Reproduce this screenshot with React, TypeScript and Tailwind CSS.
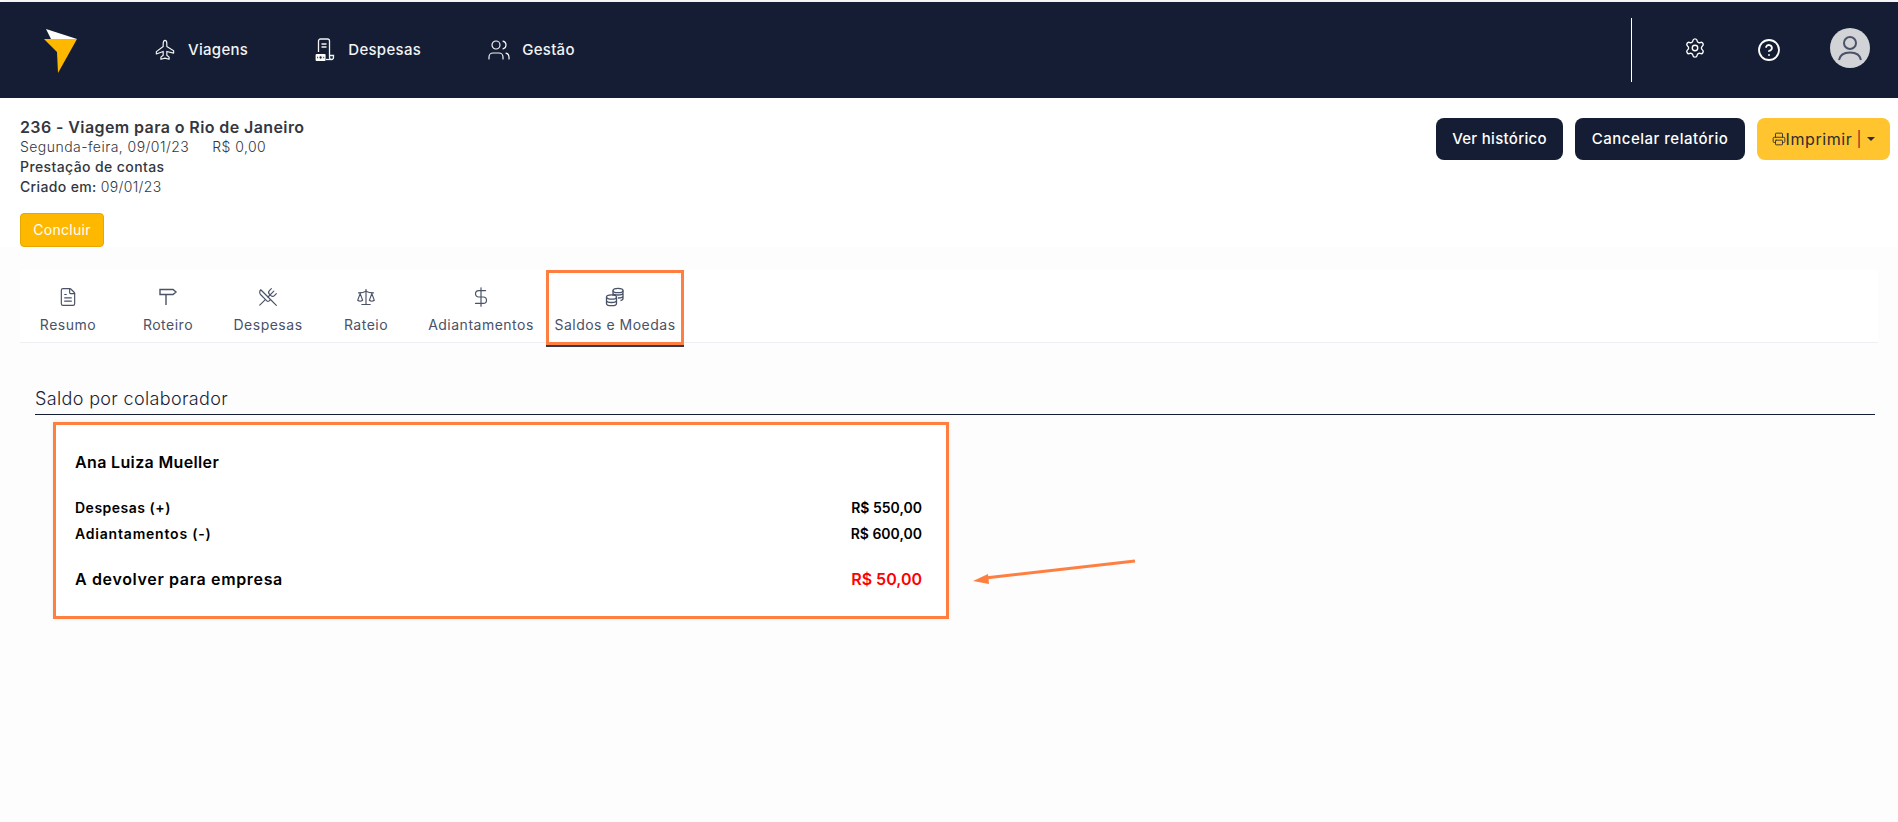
import { CircleHelp, DollarSign, FileText, Printer, Scale, Settings, UtensilsCrossed, Users } from 'lucide-react';
import type { ReactNode } from 'react';

const font = { fontFamily: 'Inter, "Liberation Sans", sans-serif' };

function PlaneIcon() {
  return (
    <svg width="20" height="24" viewBox="0 0 22 24" fill="none" stroke="currentColor" strokeWidth="1.3" strokeLinejoin="round">
      <path d="M11 1.500c1.300 0 2 1.600 2 3.500v3.200l7.500 4.600v2.600L13 13.600v4.200l2.500 2v2.400L11 21l-4.500 1.200v-2.400l2.500-2v-4.200l-7.500 2.800v-2.600L9 8.200V5c0-1.900.7-3.500 2-3.500z" />
    </svg>
  );
}

function ReceiptIcon() {
  return (
    <svg width="20" height="24" viewBox="0 0 20 24" fill="none" stroke="currentColor" strokeWidth="1.3">
      <path d="M3.500 14V3a2 2 0 0 1 2-2h7a2 2 0 0 1 2 2v16c0 1.500 1 2.500 2 2.500s2-1 2-2.500v-1.500h-3.500" />
      <path d="M6.500 6h5M6.500 9h5" />
      <path d="M11 21.500h5" />
      <rect x="0.600" y="16" width="10" height="7" rx="1" fill="#fff" stroke="none" />
      <circle cx="5.600" cy="19.500" r="1.800" fill="#141d33" />
      <path d="M2 19.500h.8M8.400 19.500h.8" stroke="#141d33" />
    </svg>
  );
}

function SignIcon() {
  return (
    <svg width="20" height="20" viewBox="0 0 20 20" fill="none" stroke="currentColor" strokeWidth="1.4">
      <path d="M2 2.500h13l3 2.500-3 2.500H2z" />
      <path d="M8 7.500V18" />
    </svg>
  );
}

function CoinsIcon() {
  return (
    <svg width="20" height="20" viewBox="0 0 20 20" fill="none" stroke="currentColor" strokeWidth="1.3">
      <ellipse cx="13" cy="3.500" rx="5" ry="2.200" />
      <path d="M8 3.500v5M18 3.500v8c0 1-1 1.800-2.500 2M8 6.500c.5 1 2.500 1.500 5 1.500s5-1 5-2.300M13 11c2.500 0 5-1 5-2.300" />
      <ellipse cx="6.500" cy="10" rx="5" ry="2.200" />
      <path d="M1.500 10v6.500c0 1.200 2.200 2.200 5 2.200s5-1 5-2.200V10M1.500 13.300c0 1.200 2.200 2.200 5 2.200s5-1 5-2.200" />
    </svg>
  );
}

function NavItem({ icon, label, className }: { icon: ReactNode; label: string; className: string }) {
  return (
    <div className={`flex items-center gap-[13px] text-[15px] font-medium tracking-[0.3px] text-[#f2f3f5] ${className}`}>
      {icon}
      <span>{label}</span>
    </div>
  );
}

function Tab({ icon, label, className }: { icon: ReactNode; label: string; className: string }) {
  return (
    <div className={`flex flex-col items-center text-[#4a5268] ${className}`}>
      <div className="flex h-[22px] items-center">{icon}</div>
      <span className="mt-[7px] text-[14px] leading-[20px] tracking-[0.5px] whitespace-nowrap">{label}</span>
    </div>
  );
}

export default function App() {
  return (
    <div style={font} className="relative h-[822px] w-[1898px] overflow-hidden bg-[#fdfdfd] pt-[2px]">
      <header className="flex h-[96px] items-center bg-[#141d33] pr-[28px] pl-[44px] shadow-[0_2px_10px_rgba(0,0,0,0.12)]">
        <svg width="34" height="44" viewBox="0 0 34 44" className="mt-[2px]">
          <path d="M2 0l31 10H7z" fill="#fff" />
          <path d="M0 10h33L14 44l-1-21z" fill="#ffb800" />
        </svg>
        <NavItem icon={<PlaneIcon />} label="Viagens" className="ml-[77px]" />
        <NavItem icon={<ReceiptIcon />} label="Despesas" className="ml-[67px]" />
        <NavItem icon={<Users size={24} strokeWidth={1.2} className="-mr-[2px]" />} label="Gestão" className="ml-[66px]" />
        <div className="ml-auto h-[64px] w-px bg-white" />
        <Settings size={22} strokeWidth={1.500} className="ml-[52px] -mt-[4px] text-white" />
        <CircleHelp size={24} strokeWidth={1.800} className="ml-[51px] text-white" />
        <div className="ml-[49px] -mt-[4px] flex h-[40px] w-[40px] items-center justify-center rounded-full bg-[#d1d3d6]">
          <svg width="28" height="28" viewBox="0 0 28 28" fill="none" stroke="#4a5268" strokeWidth="2">
            <circle cx="14" cy="9" r="6" />
            <path d="M3 26c1-5 5.500-7.500 11-7.500S24 21 25 26" />
          </svg>
        </div>
      </header>

      <section className="flex items-start justify-between bg-white pt-[19px] pr-[8px] pl-[20px]">
        <div className="text-[14px] leading-[20px] text-[#33373f]">
          <h1 className="text-[16px] font-semibold tracking-[0.4px] whitespace-nowrap">236 - Viagem para o Rio de Janeiro</h1>
          <p className="font-light tracking-[0.45px]">
            Segunda-feira, 09/01/23<span className="ml-[23px]">R$ 0,00</span>
          </p>
          <p className="font-medium tracking-[0.4px]">Prestação de contas</p>
          <p className="font-medium tracking-[0.35px]">
            Criado em: <span className="font-light">09/01/23</span>
          </p>
          <button className="mt-[16px] h-[34px] w-[84px] rounded-[4px] border border-[#e5a800] bg-[#ffb800] text-[14px] tracking-[0.3px] text-white">
            Concluir
          </button>
        </div>
        <div className="mt-px flex gap-[12px] text-[15px] font-medium">
          <button className="h-[42px] w-[127px] rounded-[8px] bg-[#141d33] tracking-[0.3px] text-white">Ver histórico</button>
          <button className="h-[42px] w-[170px] rounded-[8px] bg-[#141d33] tracking-[0.5px] text-white">Cancelar relatório</button>
          <button className="flex h-[42px] w-[133px] items-center justify-center rounded-[8px] bg-[#ffc42e] text-[#2b2b33]">
            <Printer size={14} strokeWidth={1.500} />
            <span className="text-[16px] font-normal tracking-[0.6px]">Imprimir</span>
            <span className="ml-[4px] font-normal text-[#7a2b2b]">|</span>
            <span className="ml-[6px] h-0 w-0 border-x-[4px] border-t-[4px] border-x-transparent border-t-[#2b2b33]" />
          </button>
        </div>
      </section>

      <nav className="mx-[20px] mt-[23px] flex h-[73px] items-start border-b border-[#eeeff3] bg-white pt-[16px]">
        <Tab icon={<FileText size={20} strokeWidth={1.400} />} label="Resumo" className="w-[96px]" />
        <Tab icon={<SignIcon />} label="Roteiro" className="w-[104px]" />
        <Tab icon={<UtensilsCrossed size={20} strokeWidth={1.400} />} label="Despesas" className="w-[96px]" />
        <Tab icon={<Scale size={20} strokeWidth={1.400} />} label="Rateio" className="w-[100px]" />
        <Tab icon={<DollarSign size={22} strokeWidth={1.300} />} label="Adiantamentos" className="w-[130px]" />
        <div className="-mt-[16px] h-[75px] w-[138px] shrink-0 shadow-[0_2px_0_#333a50]">
          <div className="flex h-full flex-col items-center border-[3px] border-[#ff7f41] pt-[13px] text-[#4a5268]">
            <div className="flex h-[22px] items-center">
              <CoinsIcon />
            </div>
            <span className="mt-[7px] text-[14px] leading-[20px] tracking-[0.5px] whitespace-nowrap">Saldos e Moedas</span>
          </div>
        </div>
      </nav>

      <main className="pt-[43px] pr-[23px] pl-[35px]">
        <h2 className="border-b border-[#141d33] pb-[2px] text-[18px] leading-[26px] font-light tracking-[0.35px] text-[#1c2233]">
          Saldo por colaborador
        </h2>
        <div className="mt-[7px] ml-[18px] w-[896px] border-[3px] border-[#ff7f41] bg-white pt-[26px] pr-[24px] pl-[19px] text-black shadow-[0_0_4px_rgba(0,0,0,0.08)]">
          <p className="text-[16px] leading-[22px] font-semibold tracking-[0.35px]">Ana Luiza Mueller</p>
          <div className="mt-[22px] flex justify-between text-[14px] leading-[26px] font-semibold">
            <span className="tracking-[0.5px]">Despesas (+)</span>
            <span>R$ 550,00</span>
          </div>
          <div className="flex justify-between text-[14px] leading-[26px] font-semibold">
            <span className="tracking-[0.8px]">Adiantamentos (-)</span>
            <span>R$ 600,00</span>
          </div>
          <div className="mt-[18px] flex justify-between pb-[23px] text-[16px] leading-[28px] font-semibold">
            <span className="tracking-[0.65px]">A devolver para empresa</span>
            <span className="text-[#ff0000]">R$ 50,00</span>
          </div>
        </div>
      </main>

      <svg className="absolute top-[550px] left-[965px]" width="180" height="40" viewBox="0 0 180 40" fill="none">
        <path d="M170 11L20 28" stroke="#ff7f41" strokeWidth="3" />
        <path d="M8 31l15-7 1 10z" fill="#ff7f41" />
      </svg>
    </div>
  );
}
